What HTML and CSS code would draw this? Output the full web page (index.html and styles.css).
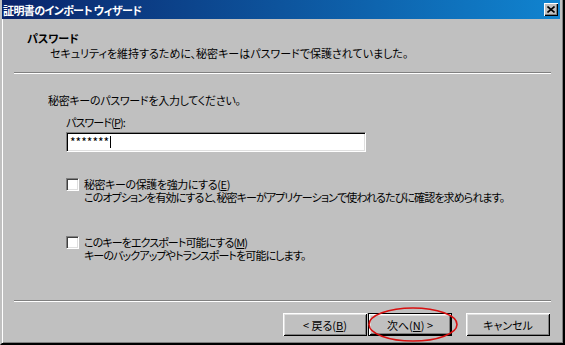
FILE: index.html
```html
<!DOCTYPE html>
<html lang="ja">
<head>
    <meta charset="UTF-8">
    <title>証明書のインポート ウィザード</title>
    <link rel="stylesheet" href="styles.css">
</head>
<body>
    <div class="window">
        <div class="titlebar">
            <span class="title-text">証明書のインポート ウィザード</span>
            <button class="close-button">
                <svg width="8" height="7" viewBox="0 0 8 7"><path d="M0.5 0.5 L7.5 6.5 M7.5 0.5 L0.5 6.5" stroke="#000" stroke-width="1.6" fill="none"/></svg>
            </button>
        </div>

        <div class="header">
            <h1>パスワード</h1>
            <p class="subtitle">セキュリティを維持するために、秘密キーはパスワードで保護されていました。</p>
        </div>
        <div class="separator"></div>

        <div class="page-body">
            <p class="intro">秘密キーのパスワードを入力してください。</p>
            <label class="field-label" for="password">パスワード(<u>P</u>):</label>
            <div class="password-box" id="password"><span>*******</span><span class="caret"></span></div>

            <div class="option option-first">
                <span class="checkbox"></span>
                <div class="option-text">
                    <div class="option-title">秘密キーの保護を強力にする(<u>E</u>)</div>
                    <div>このオプションを有効にすると、秘密キーがアプリケーションで使われるたびに確認を求められます。</div>
                </div>
            </div>
            <div class="option option-second">
                <span class="checkbox"></span>
                <div class="option-text">
                    <div>このキーをエクスポート可能にする(<u>M</u>)</div>
                    <div>キーのバックアップやトランスポートを可能にします。</div>
                </div>
            </div>
        </div>

        <div class="footer">
            <div class="separator"></div>
            <div class="button-row">
                <button class="wizard-button">&lt; 戻る(<u>B</u>)</button>
                <button class="wizard-button default-button">次へ(<u>N</u>) &gt;</button>
                <button class="wizard-button cancel-button">キャンセル</button>
            </div>
        </div>

        <!-- red marker drawn over the Next button -->
        <svg class="highlight" width="92" height="38" viewBox="0 0 92 38">
            <ellipse cx="46" cy="18.5" rx="44" ry="16.5" fill="none" stroke="#d81010" stroke-width="1.6"/>
        </svg>
    </div>
</body>
</html>
```

FILE: styles.css
```css
body {
    margin: 0;
    padding: 0;
    background-color: #c0c0c0;
    font-family: "Noto Sans CJK JP", "Noto Sans", sans-serif;
    font-size: 11px;
    font-feature-settings: "palt";
    color: #000000;
}
.window {
    position: relative;
    box-sizing: border-box;
    width: 565px;
    height: 345px;
    display: flex;
    flex-direction: column;
    background-color: #c0c0c0;
    border-left: 2px solid #c0c0c0;
    border-right: 2px solid #000000;
    border-bottom: 2px solid #000000;
    box-shadow: inset 1px 0 #ffffff, inset -1px -1px #808080;
    padding: 0 3px 1px 0;
}
.titlebar {
    height: 19px;
    display: flex;
    align-items: center;
    justify-content: space-between;
    background: linear-gradient(to right, #0a246a, #1084d0);
    padding: 0 2px 0 1px;
}
.title-text {
    color: #ffffff;
    font-weight: bold;
    line-height: 14px;
    letter-spacing: -0.6px;
}
.close-button {
    width: 14px;
    height: 13px;
    padding: 0;
    border: none;
    display: flex;
    align-items: center;
    justify-content: center;
    background-color: #c0c0c0;
    box-shadow: inset 1px 1px #ffffff, inset -1px -1px #000000, inset -2px -2px #808080;
}
.header {
    height: 53px;
    box-sizing: border-box;
    padding: 12px 0 0 25px;
}
h1 {
    margin: 0;
    font-size: 11px;
    font-weight: bold;
    line-height: 14px;
}
.subtitle {
    margin: 1px 0 0 23px;
    line-height: 14px;
    white-space: nowrap;
}
.separator {
    margin: 0 9px 0 12px;
    border-top: 1px solid #808080;
    border-bottom: 1px solid #ffffff;
}
.page-body {
    padding: 19px 0 0 46px;
}
.intro {
    margin: 0;
    line-height: 14px;
    letter-spacing: -0.3px;
}
.field-label {
    display: block;
    margin: 8px 0 0 18px;
    line-height: 14px;
    letter-spacing: -0.9px;
}
.password-box {
    box-sizing: border-box;
    width: 300px;
    height: 20px;
    margin: 3px 0 0 18px;
    padding: 2px 3px;
    display: flex;
    align-items: center;
    background-color: #ffffff;
    border-top: 1px solid #808080;
    border-left: 1px solid #808080;
    border-right: 1px solid #ffffff;
    border-bottom: 1px solid #ffffff;
    box-shadow: inset 1px 1px #000000, inset -1px -1px #dfdfdf;
    font-size: 12px;
    line-height: 14px;
}
.caret {
    width: 1px;
    height: 12px;
    margin-left: 1px;
    background-color: #000000;
}
.option {
    display: flex;
    margin-left: 18px;
}
.option-first {
    margin-top: 26px;
}
.option-second {
    margin-top: 32px;
}
.checkbox {
    box-sizing: border-box;
    width: 13px;
    height: 13px;
    margin-right: 5px;
    flex-shrink: 0;
    background-color: #ffffff;
    border-top: 1px solid #808080;
    border-left: 1px solid #808080;
    border-right: 1px solid #ffffff;
    border-bottom: 1px solid #ffffff;
    box-shadow: inset 1px 1px #404040, inset -1px -1px #dfdfdf;
}
.option-text {
    line-height: 13px;
    white-space: nowrap;
    letter-spacing: -0.9px;
}
.option-title {
    letter-spacing: -0.4px;
}
.footer {
    margin-top: auto;
}
.button-row {
    display: flex;
    justify-content: flex-end;
    padding: 11px 10px 6px 0;
}
.wizard-button {
    box-sizing: border-box;
    width: 84px;
    height: 23px;
    padding: 0;
    border: none;
    background-color: #c0c0c0;
    font-family: inherit;
    font-size: 11px;
    font-feature-settings: "palt";
    color: #000000;
    box-shadow: inset 1px 1px #ffffff, inset -1px -1px #000000, inset 2px 2px #dfdfdf, inset -2px -2px #808080;
}
.default-button {
    margin-left: 1px;
    border: 1px solid #000000;
}
.cancel-button {
    margin-left: 14px;
}
.highlight {
    position: absolute;
    left: 365px;
    top: 306px;
}
```
